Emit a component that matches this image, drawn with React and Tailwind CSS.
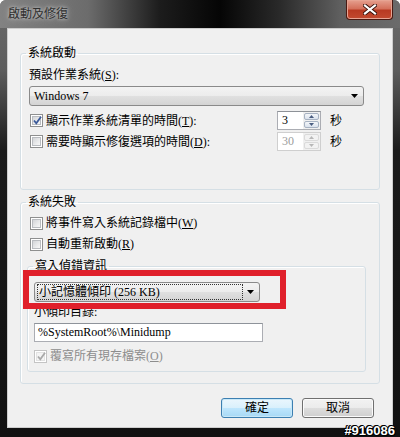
const FONT = "font-['Liberation_Serif','Noto_Sans_CJK_TC',serif]"

function Check({ checked, disabled }) {
  return (
    <span
      className={`w-[13px] h-[13px] shrink-0 border p-[1px] bg-white relative ${
        disabled ? 'border-[#c4c4c4]' : 'border-[#8e8f8f]'
      }`}
    >
      <span
        className={`block w-full h-full border ${
          disabled
            ? 'border-[#e2e2e2] bg-[#f4f4f4]'
            : 'border-[#b9bcc0] bg-[linear-gradient(135deg,#d3d5d8_0%,#eaebec_60%,#f7f7f7_100%)]'
        }`}
      />
      {checked && (
        <svg viewBox="0 0 11 11" className="absolute left-[1px] top-[0px] w-[11px] h-[11px]">
          <path
            d="M2 5.5 L4.3 8.3 L9 1.8"
            fill="none"
            stroke={disabled ? '#a9a9a9' : '#3b5a9a'}
            strokeWidth="1.8"
          />
        </svg>
      )}
    </span>
  )
}

function CheckRow({ checked, disabled, children, className = '' }) {
  return (
    <div className={`flex items-center gap-[3px] h-[16px] ${className}`}>
      <Check checked={checked} disabled={disabled} />
      <span className={`leading-[16px] whitespace-nowrap ${disabled ? 'text-[#8d8d8d]' : ''}`}>{children}</span>
    </div>
  )
}

function Arrow({ up, color }) {
  return (
    <svg viewBox="0 0 5 3" className="w-[5px] h-[3px]">
      <path d={up ? 'M0 3 L2.5 0 L5 3 Z' : 'M0 0 L5 0 L2.5 3 Z'} fill={color} />
    </svg>
  )
}

function Spinner({ value, disabled }) {
  const arrowColor = disabled ? '#b7b7b7' : '#4a5d80'
  return (
    <div
      className={`flex w-[44px] h-[19px] border bg-white ${
        disabled ? 'border-[#cfcfcf] text-[#9c9c9c]' : 'border-[#abadb3] border-t-[#8d9197]'
      }`}
    >
      <span className="flex-1 pl-[4px] leading-[17px]">{value}</span>
      <div className="w-[17px] flex flex-col gap-[1px] p-[1px] bg-[#f0f0f0]">
        <span
          className={`flex-1 flex items-center justify-center border rounded-[2px] ${
            disabled ? 'border-[#dadada] bg-[#f2f2f2]' : 'border-[#a7b2c2] bg-[linear-gradient(to_bottom,#f4f6f9,#dae2ed)]'
          }`}
        >
          <Arrow up color={arrowColor} />
        </span>
        <span
          className={`flex-1 flex items-center justify-center border rounded-[2px] ${
            disabled ? 'border-[#dadada] bg-[#f2f2f2]' : 'border-[#a7b2c2] bg-[linear-gradient(to_bottom,#f4f6f9,#dae2ed)]'
          }`}
        >
          <Arrow color={arrowColor} />
        </span>
      </div>
    </div>
  )
}

function Combo({ children, className = '', focused }) {
  return (
    <div
      className={`flex items-center h-[20px] border border-[#8a8a8a] rounded-[3px] bg-[linear-gradient(to_bottom,#f3f3f3_0%,#ececec_50%,#e0e0e0_51%,#d4d4d4_100%)] ${className}`}
    >
      <div className="flex-1 min-w-0 px-[2px]">
        {focused ? (
          <span className="block w-[206px] border border-dotted border-[#333] leading-[14px] pl-[1px] whitespace-nowrap">
            {children}
          </span>
        ) : (
          <span className="block pl-[2px] leading-[16px] whitespace-nowrap">{children}</span>
        )}
      </div>
      <div className="w-[17px] flex justify-center">
        <svg viewBox="0 0 7 4" className="w-[7px] h-[4px]">
          <path d="M0 0 L7 0 L3.5 4 Z" fill="#000" />
        </svg>
      </div>
    </div>
  )
}

function Button({ children, primary }) {
  return (
    <button
      className={`w-[72px] h-[20px] rounded-[3px] border leading-[16px] ${
        primary
          ? 'border-[#3c7fb1] bg-[linear-gradient(to_bottom,#eaf6fd_0%,#d9f0fc_50%,#bee6fd_51%,#a7d9f5_100%)] shadow-[inset_0_0_0_1px_#c8e8f8]'
          : 'border-[#707070] bg-[linear-gradient(to_bottom,#f2f2f2_0%,#ebebeb_50%,#dddddd_51%,#cfcfcf_100%)] shadow-[inset_0_0_0_1px_#fbfbfb]'
      }`}
    >
      {children}
    </button>
  )
}

export default function App() {
  return (
    <div
      className={`relative w-[400px] h-[437px] flex flex-col rounded-t-[6px] overflow-hidden bg-[linear-gradient(to_bottom,#6a6a6a_0px,#5d5d5d_70px,#1b1b1b_150px,#111111_100%)] text-[12px] text-black ${FONT}`}
    >
      {/* title bar */}
      <div className="h-[28px] shrink-0 flex items-start justify-between pl-[8px] pr-[7px] bg-[linear-gradient(to_right,#828282_0%,#6c6c6c_22%,#1c1c1c_40%,#050505_55%,#2a2a2a_70%,#5f5f5f_85%,#6b6b6b_100%)]">
        <span className="leading-[28px] text-[#303030] [text-shadow:0_0_6px_#bdbdbd,0_0_3px_#c8c8c8]">
          啟動及修復
        </span>
        <div className="w-[47px] h-[20px] rounded-b-[4px] border border-t-0 border-[#4a1a12] shadow-[inset_0_0_0_1px_#e7a493] bg-[linear-gradient(to_bottom,#e6a08f_0%,#d4705b_45%,#b83a22_55%,#c24a30_100%)] flex items-center justify-center">
          <svg viewBox="0 0 14 11" className="w-[14px] h-[11px]">
            <path d="M2 1.5 L12 9.5 M12 1.5 L2 9.5" stroke="#3a120b" strokeWidth="4" strokeLinecap="square" />
            <path d="M2 1.5 L12 9.5 M12 1.5 L2 9.5" stroke="#fff" strokeWidth="2.2" strokeLinecap="square" />
          </svg>
        </div>
      </div>

      {/* client area */}
      <div className="flex-1 px-[7px] pb-[9px] flex">
        <div className="flex-1 flex flex-col border border-[#cdcdcd] bg-[#f0f0f0] pt-[16px] px-[12px]">
          <fieldset className="border border-[#d5dfe5] rounded-[3px] shadow-[inset_1px_1px_0_#fff] pl-[8px] pr-[15px] pt-[6px] pb-[38px]">
            <legend className="-ml-[3px] px-[2px] leading-[16px]">系統啟動</legend>
            <div className="leading-[16px]">
              預設作業系統(<u>S</u>):
            </div>
            <Combo className="mt-[3px]">Windows 7</Combo>
            <div className="mt-[5px] flex items-center h-[19px]">
              <CheckRow checked className="flex-1 ml-[1px]">
                顯示作業系統清單的時間(<u>T</u>):
              </CheckRow>
              <Spinner value="3" />
              <span className="ml-[9px] mr-[22px] leading-[16px]">秒</span>
            </div>
            <div className="mt-[2px] flex items-center h-[19px]">
              <CheckRow className="flex-1 ml-[1px]">
                需要時顯示修復選項的時間(<u>D</u>):
              </CheckRow>
              <Spinner value="30" disabled />
              <span className="ml-[9px] mr-[22px] leading-[16px]">秒</span>
            </div>
          </fieldset>

          <fieldset className="mt-[4px] border border-[#d5dfe5] rounded-[3px] shadow-[inset_1px_1px_0_#fff] pl-[6px] pr-[13px] pt-[5px] pb-[11px]">
            <legend className="-ml-[1px] px-[2px] leading-[16px]">系統失敗</legend>
            <CheckRow className="pl-[3px]">
              將事件寫入系統記錄檔中(<u>W</u>)
            </CheckRow>
            <CheckRow className="pl-[3px] mt-[5px]">
              自動重新啟動(<u>R</u>)
            </CheckRow>

            <fieldset className="mt-[6px] border border-[#d5dfe5] rounded-[3px] shadow-[inset_1px_1px_0_#fff] pl-[6px] pr-[10px] pt-[8px] pb-[7px]">
              <legend className="-ml-[1px] px-[2px] leading-[16px]">寫入偵錯資訊</legend>
              <Combo focused className="w-[226px]">
                小記憶體傾印 (256 KB)
              </Combo>
              <div className="mt-[2px] leading-[16px]">小傾印目錄:</div>
              <div className="mt-[3px] w-[229px] h-[19px] border border-[#abadb3] border-t-[#8e939a] bg-white pl-[3px] leading-[17px]">
                %SystemRoot%\Minidump
              </div>
              <CheckRow checked disabled className="mt-[6px]">
                覆寫所有現存檔案(<u>O</u>)
              </CheckRow>
            </fieldset>
          </fieldset>

          <div className="mt-[14px] mr-[6px] flex justify-end gap-[9px]">
            <Button primary>確定</Button>
            <Button>取消</Button>
          </div>
        </div>
      </div>

      {/* annotation drawn over the screenshot */}
      <div className="absolute left-[23px] top-[270px] w-[263px] h-[39px] border-[6px] border-[#e0202b]" />

      <span className="absolute right-[5px] bottom-[-1px] font-['Liberation_Sans',sans-serif] font-bold text-[13px] leading-[14px] text-white [text-shadow:1px_0_0_#000,-1px_0_0_#000,0_1px_0_#000,0_-1px_0_#000,1px_1px_0_#000,-1px_-1px_0_#000]">
        #916086
      </span>
    </div>
  )
}
